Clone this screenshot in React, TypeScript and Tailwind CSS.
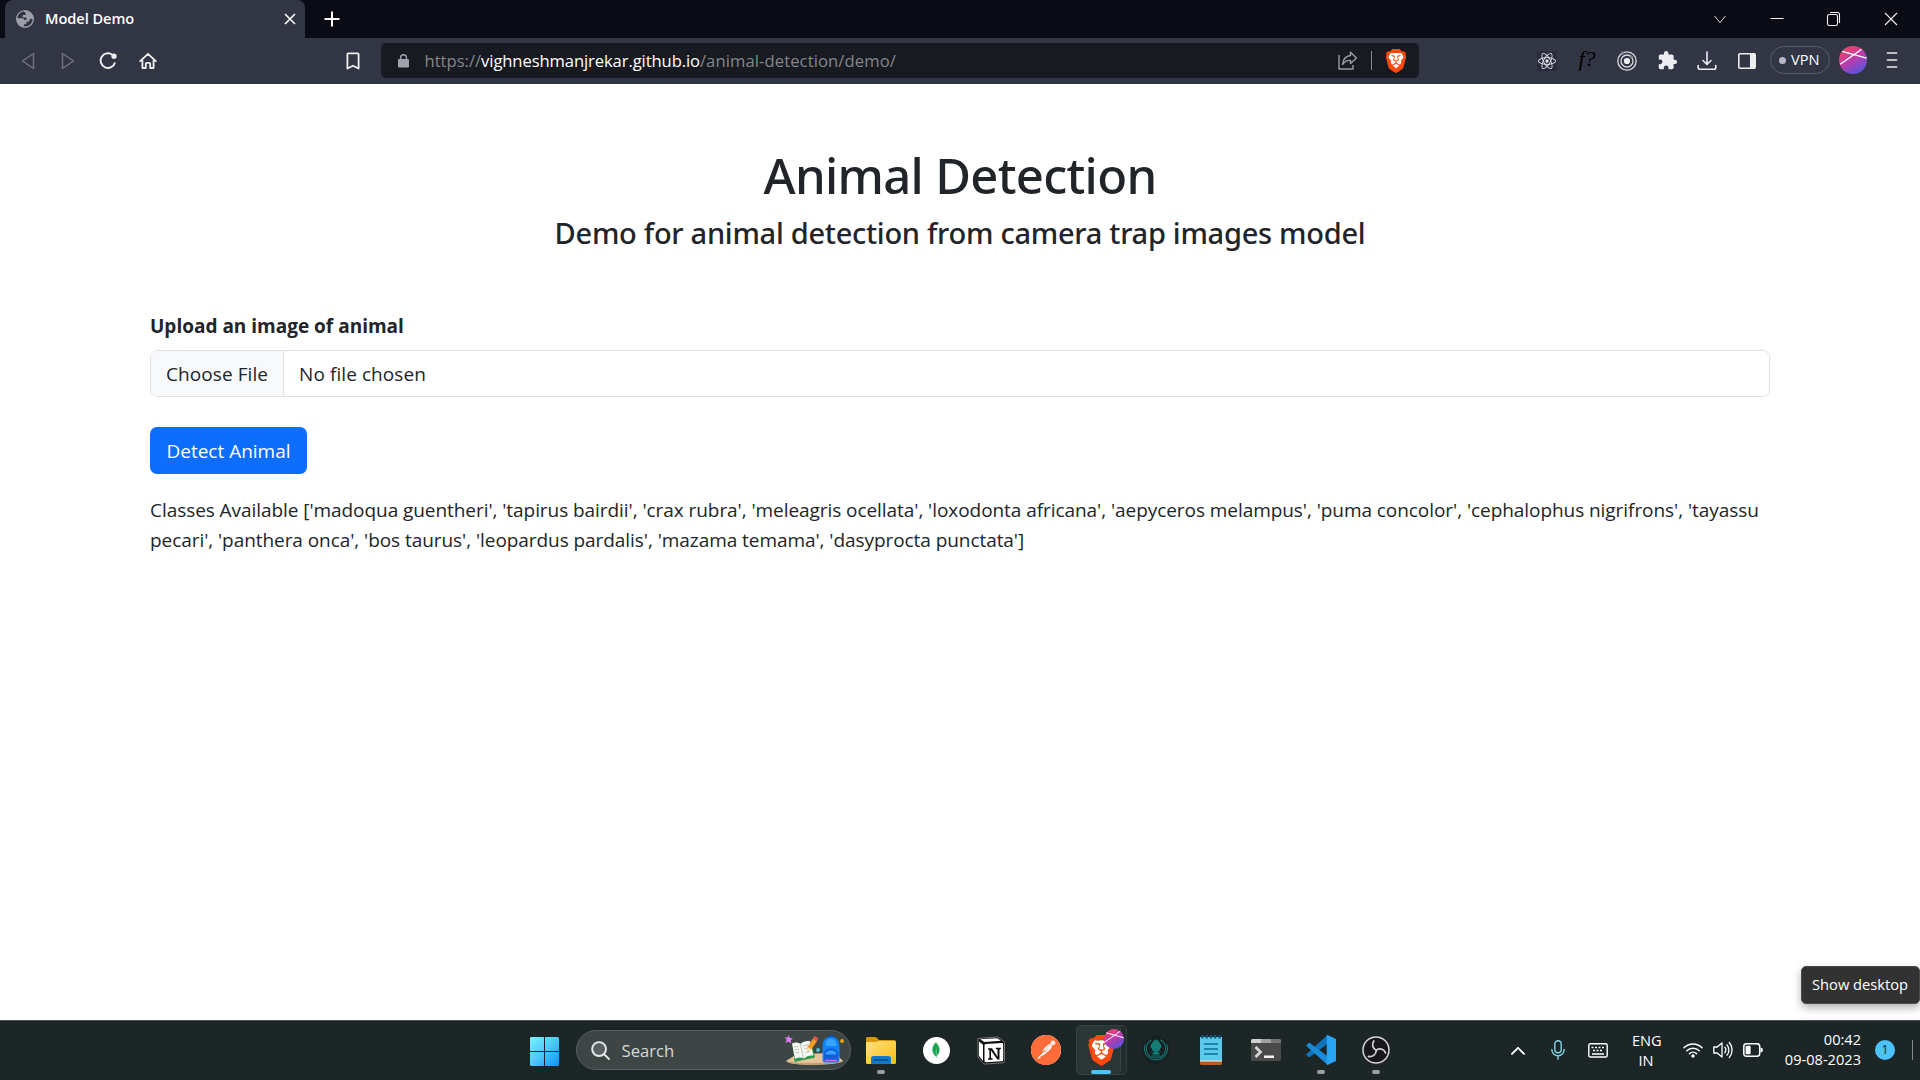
import type { ReactNode } from "react";
import {
  SiBrave,
  SiGitkraken,
  SiMongodb,
  SiPostman,
  SiReact,
} from "react-icons/si";

/* ---------- shared artwork ---------- */

function BraveLion({ className }: { className: string }) {
  return (
    <span className={`relative block ${className}`}>
      <svg viewBox="0 0 24 24" className="absolute inset-0 h-full w-full">
        <path d="M6 4h12l2 5-3 9-5 4-5-4-3-9z" fill="#fff" />
      </svg>
      <SiBrave className="absolute inset-0 h-full w-full text-[#fb4a10]" />
    </span>
  );
}

function ProfileOrb({ id, className }: { id: string; className: string }) {
  return (
    <svg viewBox="0 0 28 28" className={className}>
      <defs>
        <linearGradient id={id} x1="0.2" y1="0" x2="0.8" y2="1">
          <stop offset="0" stopColor="#f0475c" />
          <stop offset="0.45" stopColor="#c23aab" />
          <stop offset="1" stopColor="#4a58e0" />
        </linearGradient>
      </defs>
      <circle cx="14" cy="14" r="14" fill={`url(#${id})`} />
      <path d="M1.2 18.2 22.6 3.2M3.2 5.4 27.6 12.2" stroke="#fff" strokeWidth="1.4" fill="none" />
    </svg>
  );
}

/* ---------- browser chrome ---------- */

function GlobeIcon() {
  return (
    <svg viewBox="0 0 18 18" className="h-[18px] w-[18px] shrink-0">
      <circle cx="9" cy="9" r="9" fill="#9c9faa" />
      <path
        d="M6.8 1.6C3.8 2.4 1.6 5 1.4 8.2h4.8c1.2 0 2 .8 2 1.8h1.4c.6 0 1-.5 1-1.1 0-.8-.6-1.3-1.4-1.3H7.8c-.7 0-1.2-.5-1.2-1.2 0-.8.5-1.3 1.2-1.3h.8c.8 0 1.2-.5 1.2-1.2 0-.7-.5-.9-.9-1.4-.5-.5-.4-1.1-2.1-.9z"
        fill="#323544"
      />
      <path
        d="M16.6 9.4c-.6-.8-1.4-.8-2.1-.6-.8.3-1 1-1.1 1.900-.1.8-.9.9-1.800.9-.9.1-1.2.7-1.2 1.5 0 .9-.7 1.2-1.7 1.2-.8 0-1 .6-1 1.1 0 .6.4.9 1.3 1 4 .1 7.2-3 7.6-7z"
        fill="#323544"
      />
    </svg>
  );
}

function TabStrip() {
  return (
    <header className="flex h-[38px] bg-[#0b0b15] pl-[5px] text-white">
      <div className="flex w-[300px] items-center rounded-t-lg bg-[#323544] pr-[9px] pl-[11px]">
        <GlobeIcon />
        <span className="ml-[11px] pb-0.5 text-[14.6px] leading-5 font-semibold tracking-[-0.05px]">Model Demo</span>
        <svg viewBox="0 0 12 12" className="ml-auto h-3 w-3" stroke="#fff" strokeWidth="1.6">
          <path d="M1 1l10 10M11 1 1 11" />
        </svg>
      </div>
      <div className="ml-[19px] flex items-center">
        <svg viewBox="0 0 16 16" className="h-4 w-4" stroke="#fff" strokeWidth="2">
          <path d="M8 .5v15M.5 8h15" />
        </svg>
      </div>
      <div className="mr-px ml-auto flex">
        <WindowButton>
          <path d="M2.5 5 8 11.5 13.5 5" strokeWidth="0.9" />
        </WindowButton>
        <WindowButton>
          <path d="M1.5 7.5h13" strokeWidth="1" />
        </WindowButton>
        <WindowButton>
          <rect x="1.5" y="3.5" width="10" height="11" rx="1.8" />
          <path d="M4 1.500h7.500a2 2 0 0 1 2 2V12" />
        </WindowButton>
        <WindowButton>
          <path d="M2 2l12 12M14 2 2 14" />
        </WindowButton>
      </div>
    </header>
  );
}

function WindowButton({ children }: { children: ReactNode }) {
  return (
    <div className="flex w-[57px] items-center justify-center">
      <svg viewBox="0 0 16 16" className="h-4 w-4" fill="none" stroke="#f2f2f4" strokeWidth="1.1">
        {children}
      </svg>
    </div>
  );
}

function ToolCell({ children }: { children: ReactNode }) {
  return <div className="flex w-10 shrink-0 items-center justify-center pb-px">{children}</div>;
}

function Toolbar() {
  return (
    <nav className="flex h-[46px] items-stretch bg-[#323544] pl-2">
      <ToolCell>
        <svg viewBox="0 0 14 18" className="h-[18px] w-3.5" fill="none" stroke="#6f7280" strokeWidth="1.5" strokeLinejoin="round">
          <path d="M12.500 1.500v15L1.500 9z" />
        </svg>
      </ToolCell>
      <ToolCell>
        <svg viewBox="0 0 14 18" className="h-[18px] w-3.5" fill="none" stroke="#6f7280" strokeWidth="1.5" strokeLinejoin="round">
          <path d="M1.500 1.500v15L12.500 9z" />
        </svg>
      </ToolCell>
      <ToolCell>
        <svg viewBox="0 0 18 18" className="h-[18px] w-[18px]" fill="none" stroke="#f0f0f2" strokeWidth="1.9">
          <path d="M13.400 2.800A7.300 7.300 0 1 0 16 10.500" />
          <circle cx="15" cy="4.200" r="2.600" fill="#f0f0f2" stroke="none" />
        </svg>
      </ToolCell>
      <ToolCell>
        <svg viewBox="0 0 18 18" className="h-[18px] w-[18px]" fill="none" stroke="#f0f0f2" strokeWidth="1.8" strokeLinejoin="round" strokeLinecap="round">
          <path d="M1.200 9.200 9 1.800l7.800 7.400M3.400 8v8h3.400v-4.200a1 1 0 0 1 1-1h2.400a1 1 0 0 1 1 1V16h3.400V8" />
        </svg>
      </ToolCell>
      <div className="ml-[165px] flex">
        <ToolCell>
          <svg viewBox="0 0 14 18" className="h-[18px] w-3.5" fill="none" stroke="#f0f0f2" strokeWidth="1.8" strokeLinejoin="round">
            <path d="M2.200 1.400h9.600q.8 0 .8.800V16.500L7 13.700 1.400 16.500V2.200q0-.8.8-.8z" />
          </svg>
        </ToolCell>
      </div>
      <div className="mt-[5px] ml-2 flex h-[35px] w-[1038px] items-center rounded-[5px] bg-[#171a20] pr-[11px] pl-[17px]">
        <svg viewBox="0 0 11 14" className="h-3.5 w-[11px]">
          <rect y="5" width="11" height="8.500" rx="1.200" fill="#a0a3ae" />
          <path d="M2.600 6V3.600a2.900 2.900 0 0 1 5.800 0V6" fill="none" stroke="#a0a3ae" strokeWidth="1.4" />
        </svg>
        <p className="ml-[15.5px] text-[16.6px] leading-6 whitespace-nowrap text-[#85868a]">
          https://<span className="tracking-[-0.1px] text-white">vighneshmanjrekar.github.io</span>
          <span className="tracking-[0.1px]">/animal-detection/demo/</span>
        </p>
        <svg viewBox="0 0 20 19" className="ml-auto h-[19px] w-5" fill="none" stroke="#9b9ca0" strokeWidth="1.4" strokeLinejoin="round">
          <path d="M1 4v14h14v-4" />
          <path d="M12.500 1.200 18.500 7l-6 5.500V9.400C9 9.200 6.500 10.500 4.500 13.500 5 8.500 7.600 5 12.500 4.500z" />
        </svg>
        <span className="ml-[13px] h-[19px] w-px bg-[#8a8b90]" />
        <BraveLion className="ml-3 h-6 w-6" />
      </div>
      <div className="ml-[108px] flex">
        <ToolCell>
          <span className="flex h-5 w-5 items-center justify-center bg-[#292c3c]">
            <SiReact className="h-[18px] w-[18px] text-[#e8e8ee]" />
          </span>
        </ToolCell>
        <ToolCell>
          <span className="pb-1 font-['Liberation_Serif',serif] text-[22px] leading-6 font-medium text-black italic">f?</span>
        </ToolCell>
        <ToolCell>
          <svg viewBox="0 0 20 20" className="h-5 w-5" fill="none" stroke="#d9dae0" strokeWidth="1.3">
            <circle cx="10" cy="10" r="9.200" />
            <circle cx="10" cy="10" r="6" />
            <circle cx="10" cy="10" r="3.100" fill="#f0f0f2" stroke="none" />
            <circle cx="5.500" cy="2" r="1.700" fill="#85868c" stroke="none" />
            <circle cx="14.500" cy="6" r="1.500" fill="#85868c" stroke="none" />
          </svg>
        </ToolCell>
        <ToolCell>
          <svg viewBox="0 0 24 24" className="h-[21px] w-[21px]" fill="#ededf0">
            <path d="M20.500 11H19V7c0-1.100-.9-2-2-2h-4V3.500a2.500 2.500 0 0 0-5 0V5H4c-1.100 0-2 .9-2 2v3.800h1.500a2.700 2.700 0 0 1 0 5.400H2V20c0 1.100.9 2 2 2h3.800v-1.500a2.700 2.700 0 0 1 5.400 0V22H17c1.100 0 2-.9 2-2v-4h1.500a2.500 2.500 0 0 0 0-5z" />
          </svg>
        </ToolCell>
        <ToolCell>
          <svg viewBox="0 0 20 20" className="h-5 w-5" fill="none" stroke="#ededf0" strokeWidth="1.6" strokeLinecap="round" strokeLinejoin="round">
            <path d="M10 1v12M6 9.500l4 4 4-4M1.200 14.500v2a1.800 1.800 0 0 0 1.800 1.800h14a1.800 1.800 0 0 0 1.800-1.800v-2" />
          </svg>
        </ToolCell>
        <ToolCell>
          <svg viewBox="0 0 18 16" className="h-4 w-[18px]">
            <rect x=".8" y=".8" width="16.400" height="14.400" rx="1" fill="none" stroke="#ededf0" strokeWidth="1.6" />
            <path d="M12 1h5v14h-5z" fill="#ededf0" />
          </svg>
        </ToolCell>
      </div>
      <div className="mt-2 ml-[3px] flex h-7 w-[60px] items-center rounded-full border border-[#575a6c] pl-2">
        <span className="h-[7px] w-[7px] rounded-full bg-[#b4b6ca]" />
        <span className="ml-[5px] pb-0.5 text-[14.6px] leading-5 text-white">VPN</span>
      </div>
      <ProfileOrb id="toolbar-orb" className="mt-2 ml-[9px] h-7 w-7" />
      <svg viewBox="0 0 12 18" className="mt-[13px] ml-[19px] h-[18px] w-3" stroke="#ededf0" strokeWidth="1.7" strokeLinecap="round">
        <path d="M1.500 2h9M1.500 9h9M1.500 16h9" />
      </svg>
    </nav>
  );
}

/* ---------- page ---------- */

const classes = [
  "madoqua guentheri",
  "tapirus bairdii",
  "crax rubra",
  "meleagris ocellata",
  "loxodonta africana",
  "aepyceros melampus",
  "puma concolor",
  "cephalophus nigrifrons",
  "tayassu pecari",
  "panthera onca",
  "bos taurus",
  "leopardus pardalis",
  "mazama temama",
  "dasyprocta punctata",
];

function DemoPage() {
  return (
    <main className="flex-1 px-[150px] pt-[61px] text-[#212529]">
      <h1 className="text-center font-['Noto_Sans',sans-serif] text-[49px] leading-[60px] font-medium tracking-[-0.7px]">
        Animal Detection
      </h1>
      <h2 className="mt-2.5 text-center font-['Noto_Sans',sans-serif] text-[29px] leading-9 font-medium tracking-[-0.27px]">
        Demo for animal detection from camera trap images model
      </h2>
      <p className="mt-[60px] text-[19px] leading-[30px] font-bold">Upload an image of animal</p>
      <div className="mt-[9px] flex h-[47px] overflow-hidden rounded-[7px] border border-[#dee2e6] text-[19px] leading-[45px]">
        <span className="w-[133px] border-r border-[#dee2e6] bg-[#f8f9fa] pt-px pl-[15px] tracking-[0.08px]">Choose File</span>
        <span className="pt-px pl-[15px] tracking-[0.08px]">No file chosen</span>
      </div>
      <button className="mt-[30px] block h-[47px] w-[157px] rounded-[7px] bg-[#0d6efd] pt-px text-[19px] leading-[46px] text-white">
        Detect Animal
      </button>
      <p className="mt-[21px] text-[19px] leading-[30px] tracking-[-0.06px]">
        Classes Available [{classes.map((name) => `'${name}'`).join(", ")}]
      </p>
    </main>
  );
}

/* ---------- taskbar ---------- */

function AppCell({ children, running }: { children: ReactNode; running?: boolean }) {
  return (
    <div className="relative flex w-[55px] shrink-0 items-center justify-center">
      {children}
      {running && <span className="absolute bottom-1.5 left-[23.5px] h-1 w-2 rounded-full bg-[#9b9fa0]" />}
    </div>
  );
}

function SearchArt() {
  return (
    <svg viewBox="0 0 60 32" className="ml-auto h-8 w-[60px]">
      <path d="M2 27 13 20l38-1 8 8c-3 4-52 6-57 0z" fill="#e6c49c" />
      <path d="M2 27c5 6 54 4 57 0-8 2-47 3-57 0z" fill="#c99f70" />
      <path d="M4.500 1 5.700 3.800 9 4.200 6.800 6.200 7.200 9.500 4.500 7.800 1.500 9 2.600 5.800.5 3.300l3.100.2z" fill="#d77cf3" />
      <path d="m8.500 10 2 18 20.500-4.500L27.500 8z" fill="#2f9a4b" />
      <path d="M8 9.500c3-1.500 6-1.500 8.500.5 2-2.500 5.500-3.500 9.500-3l3.500 14.500c-4-.5-7 .5-9.500 3-2.500-1.500-6-1.500-9 .5z" fill="#f4f6f2" />
      <path d="M16.500 10l3 14.500M10.500 13l4-.8M11 16l4-.8M11.500 19l4-.8M19.500 12l5-1.500M20.200 15l5.300-1.500M21 18.500l5-1.500" stroke="#b4beb4" strokeWidth=".9" fill="none" />
      <path d="m23.500 13 5.500-8.500 4 2.800-5.500 8-4.300 1.700z" fill="#f59a23" />
      <path d="m29 4.500 1.300-2.200q2.500-.4 4 2.500L33 7.300z" fill="#e9514c" />
      <path d="m23.500 13-.3 4 4.300-1.700z" fill="#fbe2b8" />
      <circle cx="34" cy="16" r="1.900" fill="#4fc3cf" />
      <circle cx="58" cy="7" r="1.900" fill="#f2a50c" />
      <rect x="44" y="1" width="6" height="6" rx="2.500" fill="#0a4fbd" />
      <path d="M38.500 13c0-7 3-10 8.500-10s8.500 3 8.500 10v13q0 2.500-3 2.500h-11q-3 0-3-2.500z" fill="#1184f5" />
      <path d="M41.500 12c0-4.500 1.500-7 5.500-7s5.500 2.500 5.500 7z" fill="#36a4ff" />
      <path d="M40 20c0-4 3-5.500 7-5.500s7 1.500 7 5.500v6q0 1.500-2 1.500H42q-2 0-2-1.500z" fill="#0b5fdd" />
      <path d="M41.500 20.500c0-3 2.500-4 5.500-4s5.500 1 5.500 4z" fill="#3c9dff" />
      <path d="M41 26.500h12" stroke="#b978f0" strokeWidth="1.5" />
    </svg>
  );
}

function Taskbar() {
  return (
    <footer className="flex h-[60px] bg-[#1d2627] pl-[530px] text-white inset-shadow-[0_1px_0_#495051]">
      <svg viewBox="0 0 29 29" className="mt-0.5 h-[29px] w-[29px] self-center">
        <defs>
          <linearGradient id="start-tile" x1="0" y1="0" x2="29" y2="29" gradientUnits="userSpaceOnUse">
            <stop offset="0" stopColor="#7df0ff" />
            <stop offset="0.5" stopColor="#4cc9fb" />
            <stop offset="1" stopColor="#0a93f8" />
          </linearGradient>
        </defs>
        <path d="M1 0h13v14H0V1zM15 0h13l1 1v13H15zM0 15h14v14H1l-1-1zM15 15h14v13l-1 1H15z" fill="url(#start-tile)" />
      </svg>
      <div className="ml-[17px] flex h-10 w-[275px] items-center self-center rounded-full border border-[#566061] bg-[#3d4545] pr-[6px] pl-3.5">
        <svg viewBox="0 0 20 20" className="h-[19px] w-[19px]" fill="none" stroke="#e9ebeb" strokeWidth="2" strokeLinecap="round">
          <circle cx="8.500" cy="8.500" r="7.300" fill="#596061" />
          <path d="m14 14 5 5" />
        </svg>
        <span className="ml-[11.5px] pt-px text-[16.7px] leading-6 text-[#d6d9d9]">Search</span>
        <SearchArt />
      </div>

      <div className="ml-[2.5px] flex">
        <AppCell running>
          <svg viewBox="0 0 30 27" className="h-[27px] w-[30px]">
            <defs>
              <linearGradient id="folder-face" x1="0" y1="0" x2="1" y2="1">
                <stop offset="0" stopColor="#ffe27a" />
                <stop offset="1" stopColor="#fcbc16" />
              </linearGradient>
            </defs>
            <path d="M0 1.500Q0 0 1.500 0H9q1 0 1.800.8L13 3h15q2 0 2 2v6H0z" fill="#d9960a" />
            <path d="M0 6q0-1 1-1h8.500q1 0 1.800-.4L13 4h15.500Q30 4 30 5.500v20q0 1.500-1.500 1.500h-27Q0 27 0 25.500z" fill="url(#folder-face)" />
            <path d="M5 27v-5.500Q5 19 7.500 19h15q2.500 0 2.500 2.500V27z" fill="#1279cb" />
            <path d="M8.500 23h13" stroke="#0b4a86" strokeWidth="1.3" strokeLinecap="round" />
          </svg>
        </AppCell>
        <AppCell>
          <span className="flex h-[27px] w-[27px] items-center justify-center rounded-full bg-white">
            <SiMongodb className="h-4 w-4 text-[#17a650]" />
          </span>
        </AppCell>
        <AppCell>
          <svg viewBox="0 0 28 29" className="h-[29px] w-7">
            <path d="M1 2.500 19.500 1q1.500 0 2.500.8l4.500 3.400q1 .8 1 2v17.500q0 2-2 2.200L8.500 28q-1.700.1-2.700-1.200L1.800 22Q1 21 1 19.500z" fill="#0c0c0c" stroke="#8d9090" strokeWidth=".8" />
            <path d="M3 3.200 19.500 2.200q1 0 1.600.5L24 4.800 7.500 6z" fill="#fff" />
            <path d="M2 5.500l4 3.200V25L2.800 21q-.8-1-.8-2z" fill="#fff" />
            <path d="M7.500 9.200q0-1.200 1.200-1.300L25 7q1.200 0 1.200 1.200V24q0 1.200-1.200 1.300l-16.200 1q-1.300 0-1.300-1.300z" fill="#fff" />
            <path d="M11 12.200h4l5.500 8.600v-7.300l-1.600-.4v-1.300h5v1.300l-1.400.5V23.500h-2.200L14 14.500v7.600l1.700.5v1.200H11v-1.200l1.400-.5v-8.200l-1.400-.4z" fill="#0c0c0c" />
          </svg>
        </AppCell>
        <AppCell>
          <span className="flex h-[30px] w-[30px] items-center justify-center rounded-full bg-white">
            <SiPostman className="h-[30px] w-[30px] text-[#ff6c37]" />
          </span>
        </AppCell>
        <AppCell>
          <span className="absolute top-[5px] left-2 h-[50px] w-[45px] rounded-[5px] border border-[#344041] bg-[#232c2d]" />
          <span className="absolute top-[5px] left-[2.5px] h-[50px] w-[45px] rounded-[5px] border border-[#354344] bg-[#2b3637]" />
          <BraveLion className="h-[31px] w-[31px]" />
          <ProfileOrb id="taskbar-orb" className="absolute top-[9px] right-[5px] h-5 w-5" />
          <span className="absolute bottom-1.5 left-[17.5px] h-1 w-5 rounded-full bg-[#4cc2ff]" />
        </AppCell>
        <AppCell>
          <span className="flex h-7 w-7 items-center justify-center rounded-full bg-[#182022]">
            <SiGitkraken className="h-6 w-6 text-[#137c74]" />
          </span>
        </AppCell>
        <AppCell>
          <svg viewBox="0 0 22 30" className="h-[30px] w-[22px]">
            <path d="M0 26h22v2.500q0 1.500-1.500 1.500h-19Q0 30 0 28.500z" fill="#b85d16" />
            <path d="M0 25h22v1.500H0z" fill="#f4f4f4" />
            <path d="M0 2h22v23.500H0z" fill="#5cc9ea" />
            <path d="M2.500 0v3.500M6.800 0v3.500M11 0v3.500M15.200 0v3.500M19.500 0v3.500" stroke="#0f5d7c" strokeWidth="2.2" />
            <path d="M4 9h14M4 14h14M4 19h14" stroke="#0d6f92" strokeWidth="1.6" />
          </svg>
        </AppCell>
        <AppCell>
          <svg viewBox="0 0 30 22" className="h-[22px] w-[30px]">
            <rect width="30" height="22" rx="1.500" fill="#4a4a4b" />
            <path d="M0 4V1.500Q0 0 1.500 0H10v4z" fill="#d0d0d0" />
            <path d="M10 0h10v4H10z" fill="#a0a0a0" />
            <path d="M20 0h8.500Q30 0 30 1.500V4H20z" fill="#757576" />
            <path d="m4.500 8 5 5-5 5" fill="none" stroke="#d5d5d5" strokeWidth="2.8" />
            <path d="M13 16.500h10V19H13z" fill="#f4f4f4" />
          </svg>
        </AppCell>
        <AppCell running>
          <svg viewBox="0 0 30 30" className="h-[30px] w-[30px]">
            <path d="M22 8.500 3.800 22H2.500L.5 20.200V19L21.500 0z" fill="#0f74ba" />
            <path d="M22 21.500 3.800 8H2.500L.5 9.800V11L21.500 30z" fill="#1a8ad4" />
            <path d="M21.500 0 30 4v22l-8.500 4q-.8-.3-.8-1.500v-27Q20.700.3 21.500 0z" fill="#27a3f2" />
          </svg>
        </AppCell>
        <AppCell running>
          <svg viewBox="0 0 28 28" className="h-7 w-7" fill="none">
            <circle cx="14" cy="14" r="13" fill="#17161a" stroke="#d6d6d8" strokeWidth="1.5" />
            <path d="M14.300 14.200C10.500 12.500 9.500 8.500 11.800 5M14.300 14.200c3.400-2.400 7.500-1.400 9.300 2.600M14.300 14.200c-.2 4.200-3.400 6.900-7.700 6.300" stroke="#cfcfd2" strokeWidth="1.8" strokeLinecap="round" />
          </svg>
        </AppCell>
      </div>

      <div className="mr-[7px] ml-auto flex items-center text-[14.6px] leading-5">
        <svg viewBox="0 0 14 9" className="h-[9px] w-3.5" fill="none" stroke="#fff" strokeWidth="1.9" strokeLinecap="round" strokeLinejoin="round">
          <path d="m1 7.800 6-6 6 6" />
        </svg>
        <svg viewBox="0 0 14 20" className="ml-[26px] h-5 w-3.5" fill="none" stroke="#7fd3e4" strokeWidth="1.4" strokeLinecap="round">
          <rect x="3.800" y=".8" width="6.400" height="12" rx="3.200" />
          <path d="M.8 9.500a6.200 6.200 0 0 0 12.400 0M7 16v3.300" />
        </svg>
        <svg viewBox="0 0 20 15" className="ml-[23px] h-[15px] w-5" fill="none" stroke="#fff" strokeWidth="1.4">
          <rect x=".8" y=".8" width="18.400" height="13.200" rx="1.600" />
          <path d="M3.500 4.500h2M7 4.500h2M10.500 4.500h2M14 4.500h2M5 7.500h2M8.500 7.500h2M12 7.500h2M4 11h12" />
        </svg>
        <div className="ml-6 w-7 text-center">
          <p>ENG</p>
          <p>IN</p>
        </div>
        <svg viewBox="0 0 20 16" className="ml-[23px] h-4 w-5" fill="none" stroke="#fff" strokeWidth="1.5" strokeLinecap="round">
          <path d="M1 5.800a12.500 12.500 0 0 1 18 0M3.800 8.800a8.700 8.700 0 0 1 12.400 0M6.500 11.600a5 5 0 0 1 7 0" />
          <circle cx="10" cy="14" r="1.700" fill="#fff" stroke="none" />
        </svg>
        <svg viewBox="0 0 20 18" className="ml-2.5 h-[18px] w-5" fill="none" stroke="#fff" strokeWidth="1.3" strokeLinecap="round" strokeLinejoin="round">
          <path d="M.8 6v6h3.400l4.800 4V2L4.200 6zM11.800 6.200a4.500 4.500 0 0 1 0 5.600M14 3.800a8 8 0 0 1 0 10.400M16.300 1.500a11.500 11.500 0 0 1 0 15" />
        </svg>
        <svg viewBox="0 0 20 14" className="ml-2.5 h-3.5 w-5">
          <rect x=".8" y=".8" width="15.900" height="12.400" rx="2.600" fill="none" stroke="#fff" strokeWidth="1.5" />
          <rect x="2.600" y="2.800" width="5" height="8.400" rx="1" fill="#fff" />
          <path d="M17.500 4.500q2.500.3 2.500 2.500t-2.500 2.500z" fill="#fff" />
        </svg>
        <div className="ml-[21px] w-[77px] pb-0.5 text-right whitespace-nowrap">
          <p>00:42</p>
          <p>09-08-2023</p>
        </div>
        <span className="ml-3.5 flex h-5 w-5 items-center justify-center rounded-full bg-[#4cc2ff] text-xs text-[#10252f]">1</span>
        <span className="ml-[17px] h-5 w-px bg-[#868c8d]" />
      </div>
    </footer>
  );
}

export default function App() {
  return (
    <div className="relative flex h-[1080px] w-[1920px] flex-col overflow-hidden bg-white font-['Open_Sans','Noto_Sans',sans-serif]">
      <TabStrip />
      <Toolbar />
      <DemoPage />
      <Taskbar />
      <div className="absolute top-[966px] right-0 flex h-[38px] w-[119px] items-center rounded-[5px] border border-[#4b4b4b] bg-[#323232] pb-0.5 pl-[10px] text-[14.7px] leading-5 whitespace-nowrap text-white shadow-[0_4px_8px_rgba(0,0,0,0.3)]">
        Show desktop
      </div>
    </div>
  );
}
